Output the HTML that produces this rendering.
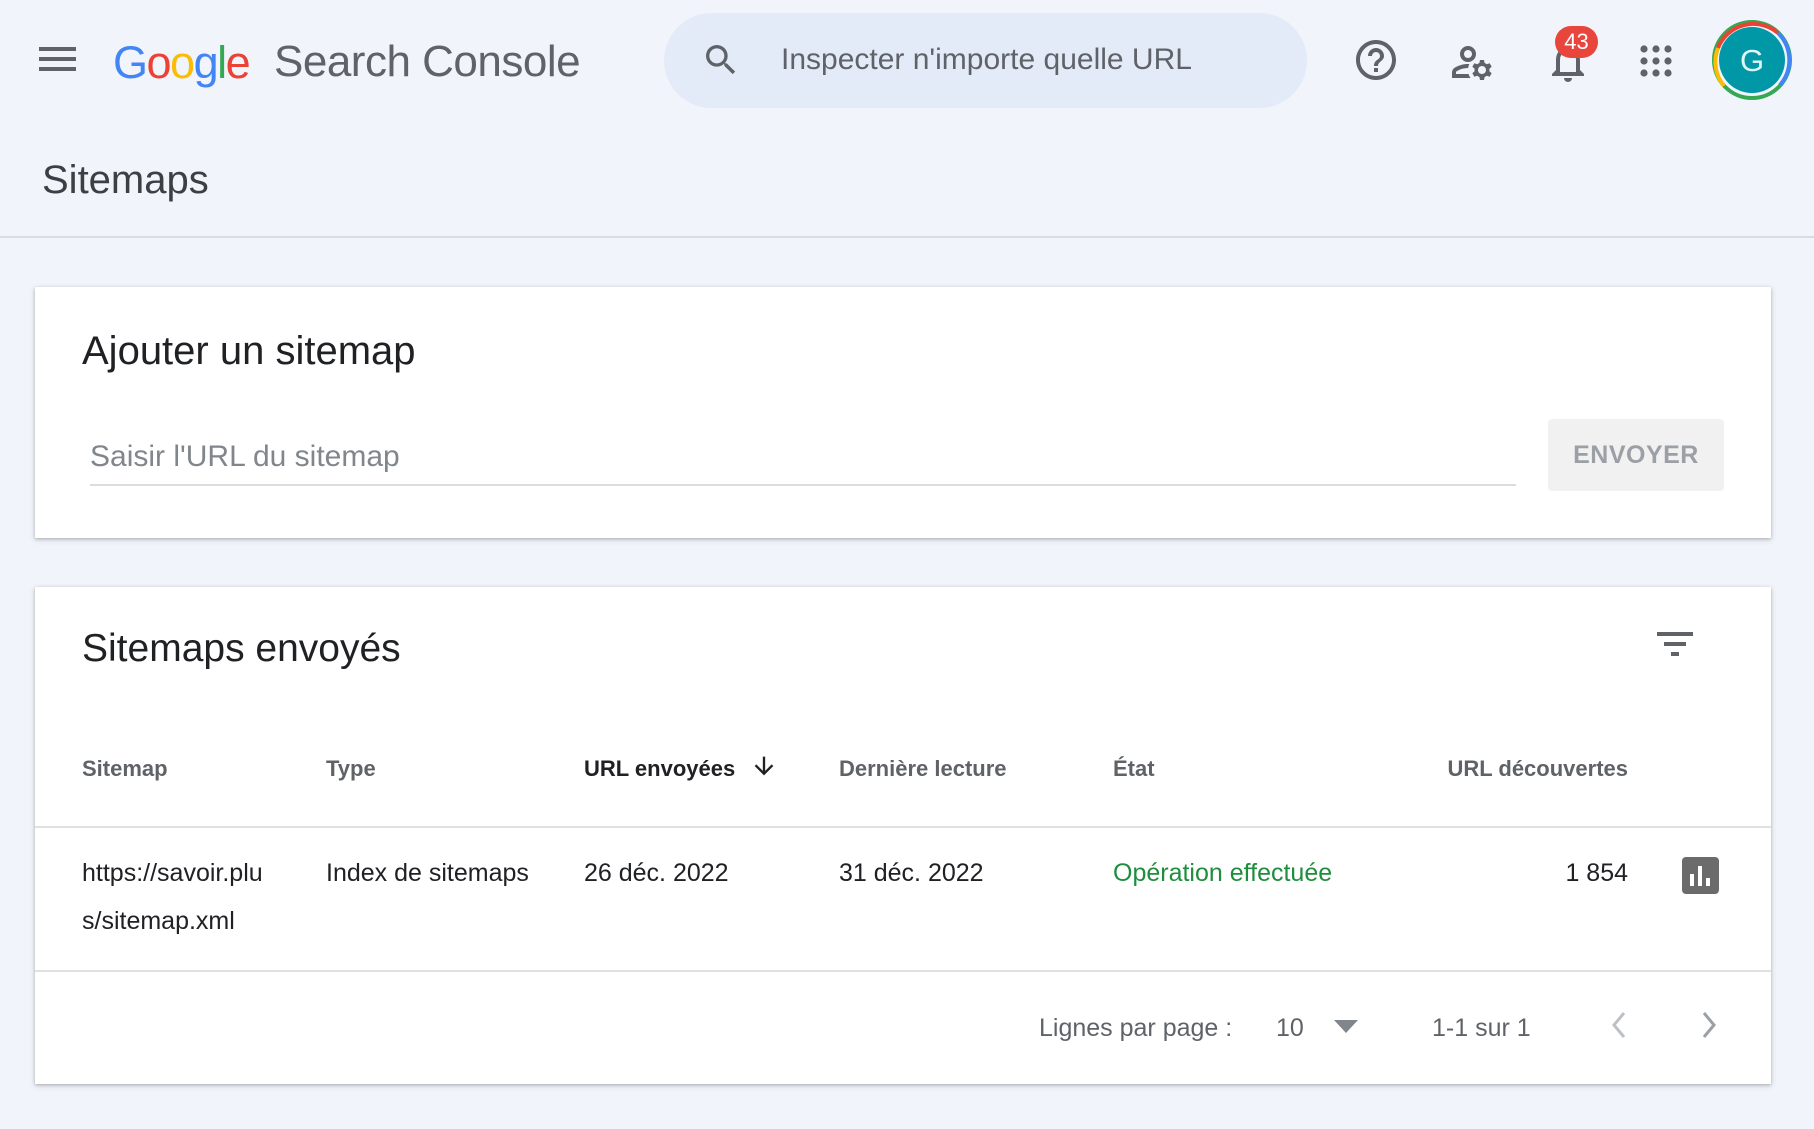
<!DOCTYPE html>
<html><head><meta charset="utf-8"><style>
*{margin:0;padding:0;box-sizing:border-box}
body{width:1814px;height:1129px;background:#f1f4fb;font-family:"Liberation Sans",Arial,sans-serif;position:relative;overflow:hidden;color:#202124}
.a{position:absolute;white-space:nowrap}
.card{position:absolute;left:35px;width:1736px;background:#fff;box-shadow:0 1px 3px rgba(60,64,67,.3),0 2px 6px rgba(60,64,67,.15)}
.th{position:absolute;top:756px;font-size:22px;color:#5f6368;font-weight:bold;white-space:nowrap}
.td{position:absolute;font-size:25px;color:#202124;white-space:nowrap}
</style></head><body>
<svg class="a" style="left:38px;top:44px" width="40" height="30" viewBox="0 0 40 30"><rect x="1" y="3" width="37" height="4" fill="#5f6368"/><rect x="1" y="13" width="37" height="4" fill="#5f6368"/><rect x="1" y="23" width="37" height="4" fill="#5f6368"/></svg>
<div class="a" style="left:113px;top:37px;font-size:45px;letter-spacing:-1.5px"><span style="color:#4285f4">G</span><span style="color:#ea4335">o</span><span style="color:#fbbc05">o</span><span style="color:#4285f4">g</span><span style="color:#34a853">l</span><span style="color:#ea4335">e</span></div>
<div class="a" style="left:274px;top:37px;font-size:44px;color:#5f6368;letter-spacing:-0.5px">Search Console</div>
<div class="a" style="left:664px;top:13px;width:643px;height:95px;border-radius:48px;background:#e3ebf9"></div>
<svg class="a" style="left:701px;top:40px" width="40" height="40" viewBox="0 0 24 24"><path fill="#5f6368" d="M15.5 14h-.79l-.28-.27A6.470 6.470 0 0016 9.5 6.5 6.5 0 109.5 16c1.61 0 3.09-.59 4.230-1.57l.27.28v.79l5 4.99L20.49 19l-4.99-5zm-6 0C7.01 14 5 11.99 5 9.5S7.01 5 9.5 5 14 7.01 14 9.5 11.99 14 9.5 14z"/></svg>
<div class="a" style="left:781px;top:43px;font-size:30px;color:#5f6368">Inspecter n'importe quelle URL</div>
<svg class="a" style="left:1352px;top:36px" width="48" height="48" viewBox="0 0 24 24"><path fill="#5f6368" d="M11 18h2v-2h-2v2zm1-16C6.48 2 2 6.48 2 12s4.48 10 10 10 10-4.48 10-10S17.52 2 12 2zm0 18c-4.41 0-8-3.59-8-8s3.59-8 8-8 8 3.59 8 8-3.59 8-8 8zm0-14c-2.21 0-4 1.79-4 4h2c0-1.1.9-2 2-2s2 .9 2 2c0 2-3 1.75-3 5h2c0-2.25 3-2.5 3-5 0-2.21-1.79-4-4-4z"/></svg>
<svg class="a" style="left:1448px;top:38px" width="48" height="48" viewBox="0 0 24 24"><path fill="#5f6368" d="M4 18v-.65c0-.34.16-.66.41-.81C6.1 15.53 8.030 15 10 15c.03 0 .05 0 .08.01.1-.7.3-1.37.59-1.98-.22-.02-.44-.03-.67-.03-2.42 0-4.68.67-6.61 1.820-.88.52-1.39 1.5-1.39 2.53V20h9.26c-.42-.6-.75-1.28-.97-2H4zM10 12c2.21 0 4-1.79 4-4s-1.79-4-4-4-4 1.79-4 4 1.79 4 4 4zm0-6c1.1 0 2 .9 2 2s-.9 2-2 2-2-.9-2-2 .9-2 2-2zM20.75 16c0-.22-.03-.42-.06-.63l1.14-1.01-1-1.73-1.45.49c-.32-.27-.68-.48-1.08-.63L18 11h-2l-.3 1.49c-.4.15-.76.36-1.08.63l-1.45-.49-1 1.73 1.14 1.01c-.03.21-.06.41-.06.63s.03.42.06.63l-1.14 1.01 1 1.73 1.45-.49c.32.27.68.48 1.08.63L16 21h2l.3-1.49c.4-.15.76-.36 1.08-.63l1.45.49 1-1.73-1.14-1.01c.03-.21.06-.41.06-.63zM17 18c-1.1 0-2-.9-2-2s.9-2 2-2 2 .9 2 2-.9 2-2 2z"/></svg>
<svg class="a" style="left:1544px;top:38px" width="48" height="48" viewBox="0 0 24 24"><path fill="#5f6368" d="M12 22c1.1 0 2-.9 2-2h-4c0 1.1.89 2 2 2zm6-6v-5c0-3.07-1.64-5.64-4.5-6.32V4c0-.83-.67-1.5-1.5-1.5s-1.5.67-1.5 1.5v.68C7.63 5.36 6 7.92 6 11v5l-2 2v1h16v-1l-2-2zm-2 1H8v-6c0-2.48 1.51-4.5 4-4.5s4 2.02 4 4.5v6z"/></svg>
<div class="a" style="left:1555px;top:26px;width:43px;height:32px;border-radius:16px;background:#e8453c;color:#fff;font-size:22px;text-align:center;line-height:32px">43</div>
<svg class="a" style="left:1638px;top:43px" width="36" height="36" viewBox="0 0 36 36" fill="#5f6368"><circle cx="6" cy="6" r="3.6"/><circle cx="18" cy="6" r="3.6"/><circle cx="30" cy="6" r="3.6"/><circle cx="6" cy="18" r="3.6"/><circle cx="18" cy="18" r="3.6"/><circle cx="30" cy="18" r="3.6"/><circle cx="6" cy="30" r="3.6"/><circle cx="18" cy="30" r="3.6"/><circle cx="30" cy="30" r="3.6"/></svg>
<svg class="a" style="left:1712px;top:20px" width="80" height="80" viewBox="0 0 80 80"><circle cx="40" cy="40" r="38" fill="none" stroke="#34a853" stroke-width="4"/><path d="M6 28 A38 38 0 0 1 66 13" fill="none" stroke="#ea4335" stroke-width="4"/><path d="M66 13 A38 38 0 0 1 68 65" fill="none" stroke="#4285f4" stroke-width="4"/><path d="M12 66 A38 38 0 0 1 6 28" fill="none" stroke="#fbbc05" stroke-width="4"/><circle cx="40" cy="40" r="33" fill="#0097a7"/><text x="40" y="51" text-anchor="middle" font-size="31" fill="#e0f7fa" font-family="Liberation Sans">G</text></svg>

<div class="a" style="left:42px;top:158px;font-size:40px;color:#3c4043">Sitemaps</div>
<div class="a" style="left:0;top:236px;width:1814px;height:2px;background:#dadce0"></div>

<div class="card" style="top:287px;height:251px"></div>
<div class="a" style="left:82px;top:329px;font-size:40px;color:#202124">Ajouter un sitemap</div>
<div class="a" style="left:90px;top:440px;font-size:30px;color:#80868b">Saisir l'URL du sitemap</div>
<div class="a" style="left:90px;top:484px;width:1426px;height:2px;background:#dadce0"></div>
<div class="a" style="left:1548px;top:419px;width:176px;height:72px;background:#f1f1f1;border-radius:4px;color:#9aa0a6;font-size:25px;font-weight:bold;text-align:center;line-height:72px;letter-spacing:.5px">ENVOYER</div>

<div class="card" style="top:587px;height:497px"></div>
<div class="a" style="left:82px;top:627px;font-size:39px;color:#202124">Sitemaps envoyés</div>
<svg class="a" style="left:1657px;top:630px" width="36" height="30" viewBox="0 0 36 30"><rect x="0" y="2" width="36" height="4" fill="#5f6368"/><rect x="7" y="12" width="22" height="4" fill="#5f6368"/><rect x="14" y="22" width="8" height="4" fill="#5f6368"/></svg>
<div class="th" style="left:82px">Sitemap</div>
<div class="th" style="left:326px">Type</div>
<div class="th" style="left:584px;color:#202124">URL envoyées</div>
<svg class="a" style="left:750px;top:752px" width="28" height="28" viewBox="0 0 24 24"><path fill="#202124" d="M20 12l-1.41-1.41L13 16.17V4h-2v12.17l-5.58-5.59L4 12l8 8 8-8z"/></svg>
<div class="th" style="left:839px">Dernière lecture</div>
<div class="th" style="left:1113px">État</div>
<div class="th" style="left:1445px;width:183px;text-align:right">URL découvertes</div>
<div class="a" style="left:35px;top:826px;width:1736px;height:2px;background:#e0e0e0"></div>
<div class="td" style="left:82px;top:859px">https://savoir.plu</div>
<div class="td" style="left:82px;top:907px">s/sitemap.xml</div>
<div class="td" style="left:326px;top:859px">Index de sitemaps</div>
<div class="td" style="left:584px;top:859px">26 déc. 2022</div>
<div class="td" style="left:839px;top:859px">31 déc. 2022</div>
<div class="td" style="left:1113px;top:859px;color:#1e8e3e">Opération effectuée</div>
<div class="td" style="left:1500px;top:859px;width:128px;text-align:right">1 854</div>
<svg class="a" style="left:1682px;top:857px" width="37" height="37" viewBox="0 0 37 37"><rect width="37" height="37" rx="4" fill="#6b6b6b"/><rect x="8" y="17" width="4" height="12" fill="#fff"/><rect x="16" y="9" width="4" height="20" fill="#fff"/><rect x="24" y="21" width="4" height="8" fill="#fff"/></svg>
<div class="a" style="left:35px;top:970px;width:1736px;height:2px;background:#e0e0e0"></div>
<div class="a" style="left:1039px;top:1014px;font-size:25px;color:#5f6368">Lignes par page :</div>
<div class="a" style="left:1276px;top:1014px;font-size:25px;color:#5f6368">10</div>
<svg class="a" style="left:1334px;top:1020px" width="24" height="14" viewBox="0 0 24 14"><path d="M0 0h24L12 13z" fill="#80868b"/></svg>
<div class="a" style="left:1432px;top:1014px;font-size:25px;color:#5f6368">1-1 sur 1</div>
<svg class="a" style="left:1607px;top:1010px" width="26" height="30" viewBox="0 0 26 30"><path d="M17 3L7 15l10 12" fill="none" stroke="#bdc1c6" stroke-width="3"/></svg>
<svg class="a" style="left:1695px;top:1010px" width="26" height="30" viewBox="0 0 26 30"><path d="M9 3l10 12L9 27" fill="none" stroke="#9aa0a6" stroke-width="3"/></svg>
</body></html>
